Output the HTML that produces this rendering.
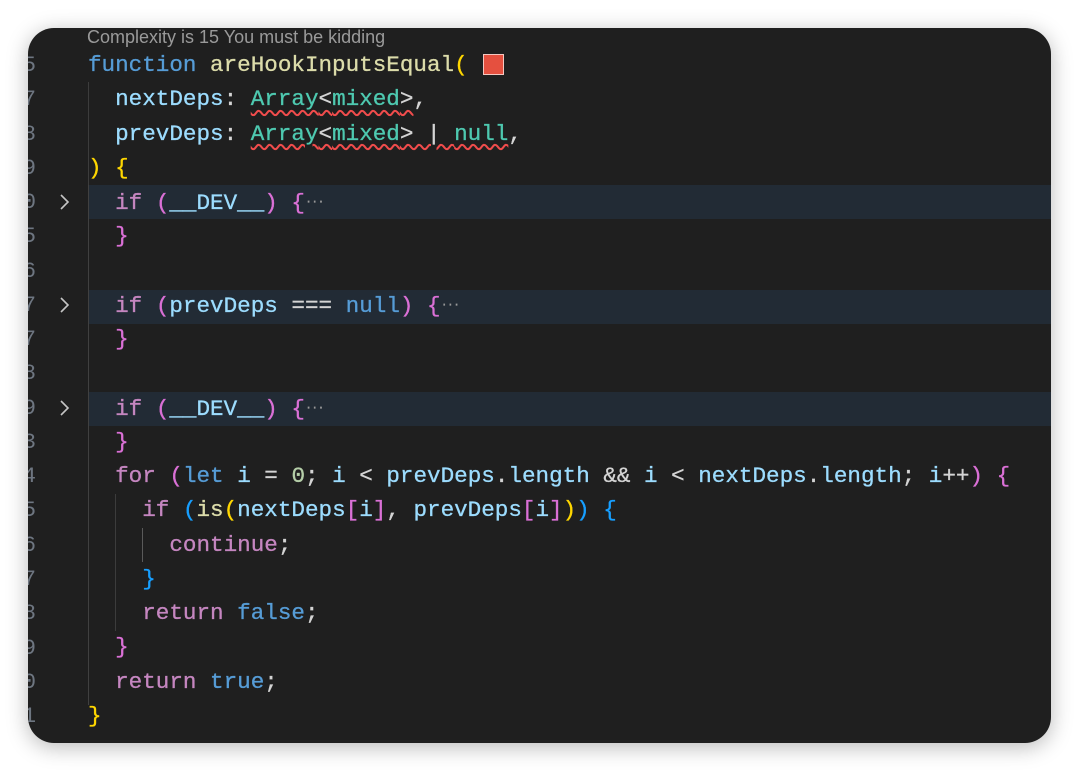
<!DOCTYPE html>
<html><head><meta charset="utf-8"><style>
html,body{margin:0;padding:0;background:#fff;width:1080px;height:772px;overflow:hidden}
.win{position:absolute;left:28px;top:28px;width:1023px;height:715px;background:#1f1f1f;border-radius:26px;overflow:hidden;box-shadow:0 4px 22px rgba(0,0,0,.28)}
.lens{position:absolute;left:59px;top:-2px;font:18px "Liberation Sans",sans-serif;color:#9a9a9a;line-height:22px}
.hl{position:absolute;left:60px;right:0;height:34px;background:#222b35}
.ln{position:absolute;left:-20px;width:28px;text-align:right;font:22.6px "Liberation Mono",monospace;color:#6e7681;line-height:34.26px}
.chev{position:absolute;left:30px;width:14px;height:34px}
.code{position:absolute;left:60px;top:20px;font:22.6px "Liberation Mono",monospace;line-height:34.26px;color:#d4d4d4;-webkit-text-stroke:0.3px currentColor}
.code div{height:34.26px;white-space:pre}
.g{position:absolute;width:1px;background:#3c3c3c}
.k{color:#c586c0}.b{color:#569cd6}.f{color:#dcdcaa}.p{color:#9cdcfe}.t{color:#4ec9b0}.n{color:#b5cea8}
.y{color:#ffd700}.m{color:#da70d6}.c{color:#179fff}
.w{text-decoration:underline wavy #f14c4c;text-decoration-thickness:1.5px;text-underline-offset:4px}
.dots{display:inline-block;font-size:12px;color:#9a9a9a;vertical-align:4px;letter-spacing:-1px}
.sq{position:absolute;left:455px;top:26px;width:19px;height:19px;background:#e5503f;border:1px solid #f4c7c0}
</style></head><body>
<div class="win">
<div class="lens">Complexity is 15 You must be kidding</div>
<div class="hl" style="top:157px"></div>
<div class="hl" style="top:262px"></div>
<div class="hl" style="top:364px"></div>
<div class="g" style="left:60px;top:54px;height:103px"></div>
<div class="g" style="left:60px;top:157px;height:520px;background:#404040"></div>
<div class="g" style="left:87px;top:466px;height:137px"></div>
<div class="g" style="left:114px;top:500px;height:34px;background:#5a5a5a"></div>
<div class="ln" style="top:20px">5<br>7<br>8<br>9<br>0<br>5<br>6<br>7<br>7<br>8<br>9<br>3<br>4<br>5<br>6<br>7<br>8<br>9<br>0<br>1</div>
<svg class="chev" style="top:157px" viewBox="0 0 14 34"><path d="M3 10 L10 17 L3 24" fill="none" stroke="#c5c5c5" stroke-width="1.6"/></svg>
<svg class="chev" style="top:260px" viewBox="0 0 14 34"><path d="M3 10 L10 17 L3 24" fill="none" stroke="#c5c5c5" stroke-width="1.6"/></svg>
<svg class="chev" style="top:363px" viewBox="0 0 14 34"><path d="M3 10 L10 17 L3 24" fill="none" stroke="#c5c5c5" stroke-width="1.6"/></svg>
<div class="sq"></div>
<div class="code"><div><span class="b">function</span> <span class="f">areHookInputsEqual</span><span class="y">(</span></div><div>  <span class="p">nextDeps</span>: <span class="w"><span class="t">Array</span>&lt;<span class="t">mixed</span>&gt;</span>,</div><div>  <span class="p">prevDeps</span>: <span class="w"><span class="t">Array</span>&lt;<span class="t">mixed</span>&gt; | <span class="t">null</span></span>,</div><div><span class="y">)</span> <span class="y">{</span></div><div>  <span class="k">if</span> <span class="m">(</span><span class="p">__DEV__</span><span class="m">)</span> <span class="m">{</span><span class="dots">···</span></div><div>  <span class="m">}</span></div><div></div><div>  <span class="k">if</span> <span class="m">(</span><span class="p">prevDeps</span> === <span class="b">null</span><span class="m">)</span> <span class="m">{</span><span class="dots">···</span></div><div>  <span class="m">}</span></div><div></div><div>  <span class="k">if</span> <span class="m">(</span><span class="p">__DEV__</span><span class="m">)</span> <span class="m">{</span><span class="dots">···</span></div><div>  <span class="m">}</span></div><div>  <span class="k">for</span> <span class="m">(</span><span class="b">let</span> <span class="p">i</span> = <span class="n">0</span>; <span class="p">i</span> &lt; <span class="p">prevDeps</span>.<span class="p">length</span> &amp;&amp; <span class="p">i</span> &lt; <span class="p">nextDeps</span>.<span class="p">length</span>; <span class="p">i</span>++<span class="m">)</span> <span class="m">{</span></div><div>    <span class="k">if</span> <span class="c">(</span><span class="f">is</span><span class="y">(</span><span class="p">nextDeps</span><span class="m">[</span><span class="p">i</span><span class="m">]</span>, <span class="p">prevDeps</span><span class="m">[</span><span class="p">i</span><span class="m">]</span><span class="y">)</span><span class="c">)</span> <span class="c">{</span></div><div>      <span class="k">continue</span>;</div><div>    <span class="c">}</span></div><div>    <span class="k">return</span> <span class="b">false</span>;</div><div>  <span class="m">}</span></div><div>  <span class="k">return</span> <span class="b">true</span>;</div><div><span class="y">}</span></div></div>
</div>
</body></html>
